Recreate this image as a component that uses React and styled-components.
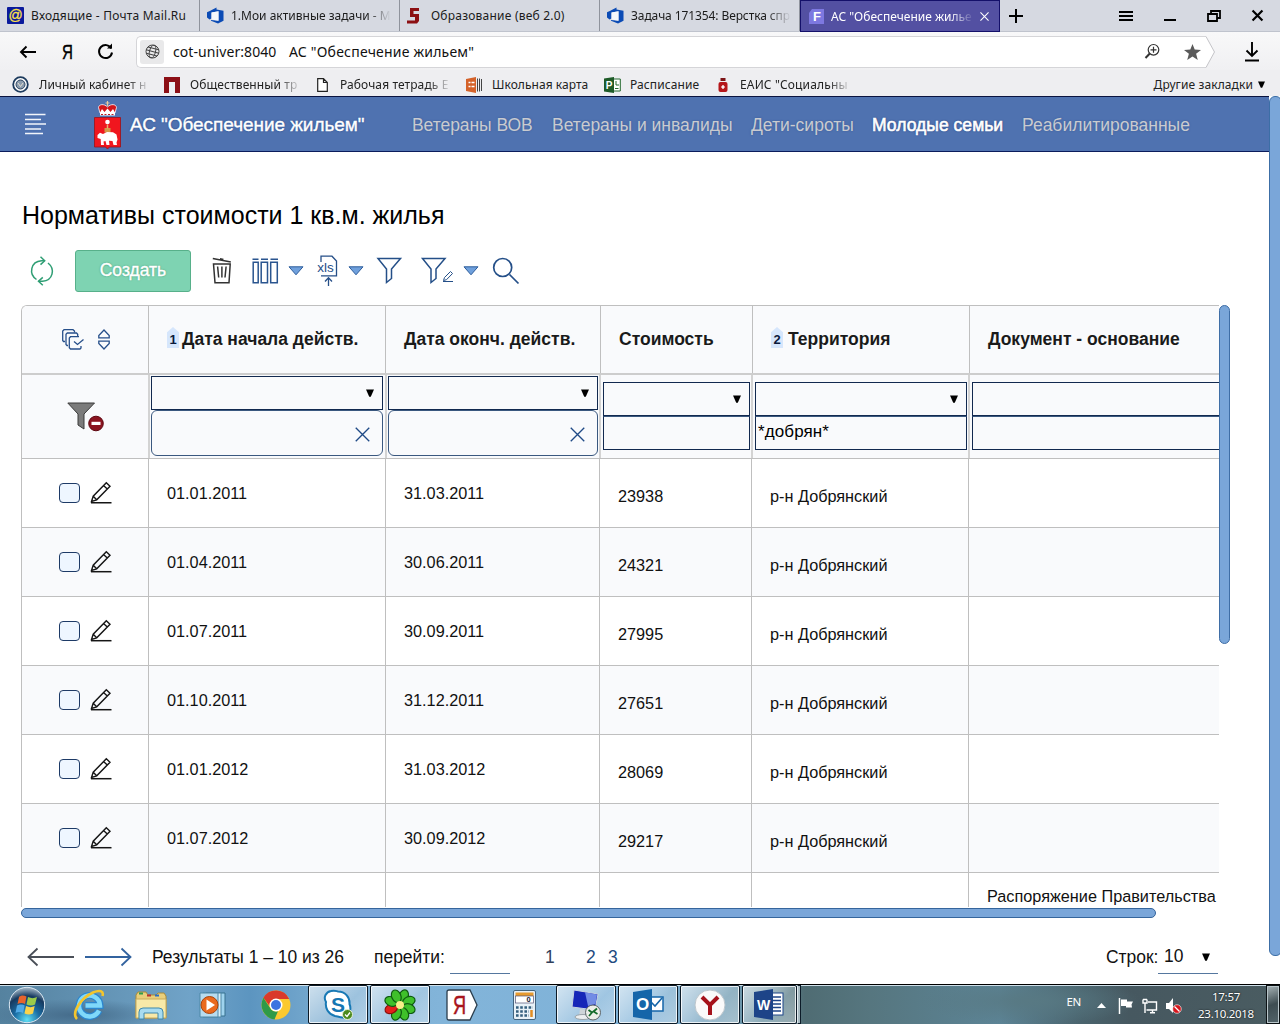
import React from "react";
import styled, { createGlobalStyle, css } from "styled-components";

const GlobalStyle = createGlobalStyle`
  * { box-sizing: border-box; }
  html, body { margin: 0; padding: 0; overflow: hidden; background: #fff; }
  body { font-family: "Liberation Sans", Arial, sans-serif; color: #111; }
  svg { display: block; flex: none; overflow: visible; }
`;

const ui = css`font-family: "Noto Sans", "Open Sans", sans-serif;`;

const Screen = styled.div`
  width: 1280px;
  height: 1024px;
  display: flex;
  flex-direction: column;
  overflow: hidden;
`;

/* ---------- browser chrome ---------- */
const TabStrip = styled.div`
  ${ui}
  height: 32px;
  flex: none;
  display: flex;
  background: #d6d9e1;
  border-bottom: 1px solid #bfc3cd;
`;
const Tab = styled.div`
  width: 200px;
  flex: none;
  height: ${(p) => (p.$active ? 32 : 31)}px;
  display: flex;
  align-items: center;
  gap: ${(p) => p.$gap || 7}px;
  padding: 0 ${(p) => (p.$active ? 10 : 8)}px 0 7px;
  font-size: 12px;
  color: ${(p) => (p.$active ? "#fff" : "#1b1b1b")};
  background: ${(p) => (p.$active ? "#5350a2" : "transparent")};
  border: ${(p) => (p.$active ? "1px solid #14106a" : "0 solid transparent")};
  border-right: 1px solid ${(p) => (p.$active ? "#14106a" : "#8f939c")};
`;
const Fade = styled.span`
  flex: ${(p) => (p.$w ? "none" : "1 1 0")};
  width: ${(p) => (p.$w ? `${p.$w}px` : "auto")};
  min-width: 0;
  overflow: hidden;
  white-space: nowrap;
  letter-spacing: ${(p) => p.$ls || 0}px;
  ${(p) => p.$fade && css`mask-image: linear-gradient(to right, #000 calc(100% - 24px), transparent);`}
`;
const WindowButtons = styled.div`
  flex: 1;
  display: flex;
  align-items: center;
  justify-content: space-between;
  padding: 0 17px 0 9px;
`;
const WindowGroup = styled.div`
  display: flex;
  align-items: center;
  gap: 31px;
`;
const AddressRow = styled.div`
  ${ui}
  height: 38px;
  flex: none;
  display: flex;
  align-items: center;
  background: linear-gradient(#f8f8f9, #f0f0f2);
  padding: 1px 20px 0 19px;
`;
const NavButtons = styled.div`
  display: flex;
  align-items: center;
  width: 117px;
  gap: 23px;
`;
const AddressBox = styled.div`
  width: 1070px;
  height: 32px;
  display: flex;
  align-items: center;
  background: #fff;
  border: 1px solid #d5d5d8;
  border-right: 0;
  border-radius: 5px 0 0 5px;
  padding-left: 3px;
  font-size: 14px;
  color: #111;
`;
const SiteBadge = styled.div`
  width: 24px;
  height: 24px;
  display: grid;
  place-items: center;
  background: #e9e9ea;
  border-radius: 3px;
  margin-right: 9px;
`;
const AddressText = styled.span`
  width: ${(p) => p.$w}px;
  white-space: nowrap;
  letter-spacing: ${(p) => p.$ls || 0}px;
`;
const AddressIcons = styled.div`
  margin-left: auto;
  display: flex;
  align-items: center;
  gap: 24px;
  padding-right: 5px;
`;
const DownloadSlot = styled.div`
  margin-left: auto;
`;
const Bookmarks = styled.div`
  ${ui}
  height: 26px;
  flex: none;
  display: flex;
  align-items: center;
  background: #eeeef1;
  padding: 3px 15px 0 12px;
  font-size: 12px;
  color: #222;
`;
const Bookmark = styled.div`
  width: ${(p) => p.$w}px;
  display: flex;
  align-items: center;
  gap: ${(p) => p.$gap || 8}px;
`;
const OtherBookmarks = styled.div`
  margin-left: auto;
  display: flex;
  align-items: center;
  gap: 5px;
  letter-spacing: 0.1px;
`;

/* ---------- application ---------- */
const Viewport = styled.div`
  height: 888px;
  flex: none;
  display: flex;
`;
const AppColumn = styled.div`
  width: 1269px;
  flex: none;
  display: flex;
  flex-direction: column;
`;
const PageScroll = styled.div`
  width: 13px;
  height: 860px;
  flex: none;
  background: #7aa6d9;
  border: 1px solid #3c6ea6;
  border-radius: 6px;
`;
const AppHeader = styled.header`
  height: 56px;
  flex: none;
  display: flex;
  align-items: center;
  background: #4f72b0;
  border-top: 1px solid #0a1440;
  border-bottom: 1px solid #0b1c5c;
  padding: 2px 0 0 25px;
  font-size: 17.5px;
`;
const Brand = styled.div`
  width: 282px;
  margin-left: 9px;
  color: #fff;
  font-size: 19px;
  white-space: nowrap;
  -webkit-text-stroke: 0.4px #fff;
  text-shadow: 0 0 2px #173a7c;
  letter-spacing: -0.06px;
`;
const Emblem = styled.div`
  margin-left: 47px;
`;
const NavItem = styled.a`
  width: ${(p) => p.$w}px;
  white-space: nowrap;
  letter-spacing: ${(p) => p.$ls || 0}px;
  color: ${(p) => (p.$active ? "#fff" : "#c9cbd0")};
  text-shadow: 0 0 2px #3a5a96;
  ${(p) => p.$active && css`-webkit-text-stroke: 0.6px #fff; text-shadow: 0 0 2px #0d2a66;`}
`;
const Content = styled.main`
  padding-left: 21px;
  display: flex;
  flex-direction: column;
`;
const Title = styled.h1`
  margin: 46px 0 0 1px;
  height: 34px;
  line-height: 34px;
  font-size: 25px;
  font-weight: 400;
  color: #000;
`;
const Toolbar = styled.div`
  height: 73px;
  display: flex;
  align-items: center;
  padding: 4px 0 0 9px;
`;
const Tool = styled.div`
  margin-left: ${(p) => p.$ml || 0}px;
`;
const CreateButton = styled.button`
  width: 116px;
  height: 42px;
  margin: 0 0 0 21px;
  padding: 0;
  border: 1px solid #57b08a;
  border-radius: 3px;
  background: #7ed3b2;
  color: #fff;
  font: 400 17.5px "Liberation Sans", Arial, sans-serif;
  -webkit-text-stroke: 0.4px #fff;
  text-shadow: 0 0 2px #2c8c66;
`;
const GridArea = styled.div`
  display: flex;
  height: 603px;
`;
const TableScroll = styled.div`
  width: 1198px;
  height: 602px;
  overflow: hidden;
  border-left: 1px solid #bfbfbf;
  border-top: 1px solid #bfbfbf;
  border-top-left-radius: 6px;
`;
const VScroll = styled.div`
  width: 11px;
  height: 339px;
  background: #7aa6d9;
  border: 1px solid #3f6ea6;
  border-radius: 6px;
`;
const HScroll = styled.div`
  width: 1135px;
  height: 10px;
  background: #7aa6d9;
  border: 1px solid #35659c;
  border-radius: 6px;
`;
const HeadRow = styled.div`
  display: grid;
  grid-template-columns: 127px 237px 215px 152px 217px 249px;
  height: 69px;
  background: #f9fafc;
  border-bottom: 2px solid #cdcdcd;
`;
const FilterRow = styled.div`
  display: grid;
  grid-template-columns: 128px 237px 214px 152px 217px 249px;
  height: 84px;
  background: #f9fafc;
  border-bottom: 1px solid #bfbfbf;
`;
const DataRow = styled.div`
  display: grid;
  grid-template-columns: 127px 237px 214px 152px 217px 250px;
  height: ${(p) => (p.$partial ? 46 : 69)}px;
  background: ${(p) => (p.$odd ? "#f9fafc" : "#fff")};
  border-bottom: ${(p) => (p.$partial ? 0 : 1)}px solid #bfbfbf;
`;
const HeadCell = styled.div`
  display: flex;
  align-items: center;
  padding-left: ${(p) => p.$pl || 18}px;
  gap: ${(p) => p.$gap || 3}px;
  border-right: ${(p) => (p.$last ? 0 : 1)}px solid #bfbfbf;
  font-size: 17.5px;
  font-weight: 700;
  color: #1a1a1a;
  white-space: nowrap;
`;
const FilterCell = styled.div`
  border-right: ${(p) => (p.$last ? 0 : 2)}px solid #d3d3d3;
  padding: ${(p) => (p.$date ? 1 : 7)}px ${(p) => (p.$last ? 0 : p.$pr || 1)}px 0 ${(p) => (p.$date ? 1 : 2)}px;
`;
const FilterIconCell = styled.div`
  border-right: 2px solid #d3d3d3;
  display: flex;
  align-items: center;
  padding: 0 0 0 45px;
`;
const SelectBox = styled.div`
  height: 34px;
  display: flex;
  align-items: center;
  justify-content: flex-end;
  padding-right: 8px;
  border: 1px solid #12294f;
  border-right-width: ${(p) => (p.$open ? 0 : 1)}px;
`;
const InputBox = styled.div`
  height: ${(p) => (p.$date ? 46 : 34)}px;
  display: flex;
  align-items: center;
  justify-content: ${(p) => (p.$date ? "flex-end" : "flex-start")};
  padding: ${(p) => (p.$date ? "2px 12px 0 0" : "0 0 3px 2px")};
  border: 1px solid ${(p) => (p.$date ? "#3a587f" : "#12294f")};
  border-right-width: ${(p) => (p.$open ? 0 : 1)}px;
  border-top-color: #3a587f;
  border-radius: ${(p) => (p.$date ? 6 : 0)}px;
  font-size: 17px;
  letter-spacing: 0.1px;
  color: #000;
`;
const Cell = styled.div`
  display: flex;
  align-items: center;
  padding: ${(p) => p.$pt || 0}px 0 0 ${(p) => p.$pl || 18}px;
  border-right: ${(p) => (p.$last ? 0 : 1)}px solid #bfbfbf;
  font-size: 16.25px;
  color: #111;
  white-space: nowrap;
`;
const Checkbox = styled.span`
  width: 21px;
  height: 20px;
  margin-right: 10px;
  border: 1px solid #1d3a66;
  border-radius: 4px;
  background: #eef6ff;
`;
const OrderBadge = styled.span`
  width: 12px;
  height: 21px;
  margin-top: -4px;
  display: grid;
  place-items: center;
  padding-top: 4px;
  background: #d6e6fc;
  clip-path: polygon(0 25%, 50% 0, 100% 25%, 100% 100%, 0 100%);
  color: #0b1a3c;
  font-size: 13px;
`;
const Pager = styled.div`
  height: 76px;
  display: flex;
  align-items: center;
  padding: 2px 51px 0 6px;
  font-size: 17.45px;
  color: #111;
`;
const PagerText = styled.span`
  width: ${(p) => p.$w}px;
  flex: none;
  margin-left: ${(p) => p.$ml || 0}px;
  white-space: nowrap;
  color: ${(p) => p.$color || "#111"};
`;
const PageInput = styled.span`
  width: 60px;
  height: 34px;
  border-bottom: 1px solid #55779f;
`;
const RowsSelect = styled.span`
  width: 60px;
  height: 34px;
  display: flex;
  align-items: center;
  justify-content: space-between;
  padding: 0 8px 0 6px;
  border-bottom: 1px solid #55779f;
`;
const RowsGroup = styled.div`
  margin-left: auto;
  display: flex;
  align-items: center;
`;

/* ---------- taskbar ---------- */
const Taskbar = styled.footer`
  ${ui}
  height: 40px;
  flex: none;
  display: flex;
  align-items: center;
  border-top: 1px solid #000;
  box-shadow: inset 0 1px 0 #cfe0ea;
  background:
    radial-gradient(ellipse 90px 16px at 75px 30px, #456c8b 0, transparent 100%),
    radial-gradient(ellipse 110px 24px at 1030px 16px, #587983 0, transparent 100%),
    linear-gradient(90deg, #55829f 0, #70a3c8 190px, #5c95c0 250px, #7aacd1 330px, #82b4d9 440px, #7fb2d8 650px, #668e9d 770px, #4f6c73 805px, #56767f 870px, #5c8496 1000px, #4a646e 1080px, #465860 1130px, #4a5c61 1280px);
`;
const Task = styled.div`
  width: ${(p) => p.$w || 60}px;
  height: 39px;
  margin-right: 2px;
  display: grid;
  place-items: center;
  border: 1px solid ${(p) => (p.$open ? "#0c1b28" : "transparent")};
  border-radius: 2px;
  ${(p) =>
    p.$open &&
    css`
      background: linear-gradient(135deg, rgba(255, 255, 255, 0.65), rgba(255, 255, 255, 0.25) 60%, rgba(255, 255, 255, 0.4));
      box-shadow: inset 0 0 0 1px rgba(255, 255, 255, 0.8);
    `}
`;
const Stack = styled.div`
  width: 4px;
  height: 39px;
  margin-left: -2px;
  border: 1px solid #0c1b28;
  border-left-color: #dfe9ee;
  background: #a9bcc3;
`;
const Tray = styled.div`
  margin-left: auto;
  display: flex;
  align-items: center;
  color: #fff;
  font-size: 11.5px;
  letter-spacing: -0.3px;
`;
const Language = styled.span`
  margin-top: -6px;
`;
const TrayIcons = styled.div`
  display: flex;
  align-items: center;
  gap: 8px;
  padding-top: 2px;
  margin: 0 14px 0 16px;
`;
const UpSlot = styled.div`
  margin-right: 4px;
`;
const Clock = styled.div`
  width: 60px;
  text-align: center;
  line-height: 17px;
  text-shadow: 0 0 2px #000;
  white-space: nowrap;
`;
const ShowDesktop = styled.div`
  width: 14px;
  height: 39px;
  margin-left: 10px;
  border: 1px solid #0b1114;
  box-shadow: inset 0 0 0 1px #b9c6ca;
  background: linear-gradient(160deg, #a7b3b6, #3e4d52 50%, #53646a);
`;

/* ---------- glyphs ---------- */
const Caret = ({ w = 8 }) => (
  <svg width={w} height={w} viewBox="0 0 8 8"><path d="M0 0.5H8L4.8 7.8H3.2Z" fill="#000" /></svg>
);
const BlueCaret = () => (
  <svg width="16" height="10" viewBox="0 0 16 10"><path d="M1 .8H15L8 8.8Z" fill="#6fa0dc" stroke="#2d5d9c" strokeWidth="1" /></svg>
);
const MailIcon = () => (
  <svg width="17" height="17" viewBox="0 0 17 17">
    <rect width="17" height="17" rx="1" fill="#0a1a9c" />
    <text x="8.5" y="12.6" fontSize="14" textAnchor="middle" fill="#ffe14a" stroke="#ffe14a" strokeWidth=".3" fontFamily="Liberation Sans">@</text>
  </svg>
);
const DevOpsIcon = () => (
  <svg width="17" height="17" viewBox="0 0 17 17">
    <path d="M0 5.200 2.800 4 9.500 .5V2.600L16.500 3.800V13.800L11 16.500 4 13.800V13L11.500 13.800V4.200L4.500 5.500V11.500L2.500 12.500 0 10.600Z" fill="#0b4bb5" />
    <path d="M4.500 5.500 11.500 4.200V13.800L4.500 12.500Z" fill="#f5f7fb" />
  </svg>
);
const FiveIcon = () => (
  <svg width="15" height="16" viewBox="0 0 15 16">
    <path d="M3 0H12V3H6.500V6H12V13L10 15.500H0V12.500H8V9H3Z" fill="#8c0f12" />
  </svg>
);
const FIcon = () => (
  <svg width="17" height="17" viewBox="0 0 17 17">
    <path d="M4 1H16V16H1V5Z" fill="#7d78e0" />
    <text x="9" y="13.4" fontSize="13" fontWeight="700" textAnchor="middle" fill="#fff" fontFamily="Liberation Sans">F</text>
  </svg>
);
const CrossIcon = ({ s = 10, c = "#fff", w = 1.2 }) => (
  <svg width={s} height={s} viewBox="0 0 10 10"><path d="M.5 .5 9.5 9.5M9.5 .5.5 9.5" stroke={c} strokeWidth={w} /></svg>
);
const EmblemIcon = () => (
  <svg width="27" height="48" viewBox="0 0 27 48">
    <path d="M6 12 4.5 6.5C5 3 10 2.5 13.5 6 17 2.5 22 3 22.500 6.500L21 12Z" fill="#d3151b" stroke="#fff" strokeWidth=".8" />
    <path d="M13.500 0V5M11.500 2H15.500" stroke="#e8c9a0" strokeWidth="1.200" />
    <path d="M6 11.500 8 8 10.500 11 13.500 7.500 16.500 11 19 8 21 11.500V14.500H6Z" fill="#fff" />
    <path d="M7 13.500H20" stroke="#c01a20" strokeWidth="1" strokeDasharray="2 1.500" />
    <path d="M.5 16.500H26.500V46H15.500L13.500 48 11.500 46H.5Z" fill="#f0161e" stroke="#9c1016" strokeWidth=".8" />
    <circle cx="13.500" cy="21" r="2.300" fill="#fff" />
    <path d="M10.500 27H16.500V31.500H10.500Z" fill="#d19a48" />
    <path d="M13.500 23.500V27.500" stroke="#e8b070" strokeWidth="1.500" />
    <path d="M3.500 34 6 31.700 9 33 13 31 19 31.200 22.500 33.500 23.500 38.500 22.500 41.500 23 44H19.500L18.500 40 15 39.700 15.500 44H12.500L11.500 40 9.500 40.500 10 44H7L6.700 38 3.500 37Z" fill="#fff" />
  </svg>
);
const RefreshIcon = () => (
  <svg width="24" height="30" viewBox="0 0 24 30" fill="none" stroke="#2f9e74" strokeWidth="1.500">
    <path d="M6.500 23.500C-1.500 18 .5 5.500 11.500 4.700H14.500" />
    <path d="M10.500.8 14.700 4.700 10.500 8.600" />
    <path d="M18 7C25.500 13 23 24.500 12.500 25.300H8.500" />
    <path d="M12.800 21.400 8.500 25.300 12.800 29.200" />
  </svg>
);
const TrashIcon = () => (
  <svg width="20" height="28" viewBox="0 0 20 28" fill="none" stroke="#333" strokeWidth="1.500">
    <path d="M.8 1.500 18.800 5M8 1.800 11.500 2.500" />
    <path d="M1.500 7H18.200L17 25.800H3Z" />
    <path d="M5.600 9.500 6.700 20.500M9.900 9.500V20.500M14.100 9.500 13 20.500" />
  </svg>
);
const ColumnsIcon = () => (
  <svg width="27" height="26" viewBox="0 0 27 26" fill="none" stroke="#2a558f" strokeWidth="1.500">
    <path d="M.5 1.200H6.500M9 1.200H16M18.500 1.200H26" strokeWidth="1.600" />
    <path d="M1.200 4.200H6.200V24.800H1.200ZM9.200 4.200H15.500V24.800H9.200ZM18.700 4.200H25.300V24.800H18.700Z" />
  </svg>
);
const XlsIcon = () => (
  <svg width="22" height="32" viewBox="0 0 22 32" fill="none" stroke="#264f88" strokeWidth="1.300">
    <path d="M5 7V1.200H16L20.500 6V20.800H5" />
    <path d="M12.500 31V23M9 26.500 12.500 22.800 16 26.500" />
    <text x="9.500" y="16.500" fontSize="13.500" textAnchor="middle" fill="#264f88" stroke="none" fontFamily="Liberation Sans">xls</text>
  </svg>
);
const FunnelIcon = () => (
  <svg width="25" height="27" viewBox="0 0 25 27" fill="none" stroke="#244f88" strokeWidth="1.500">
    <path d="M1 1.500H23.500L14.500 12V21.500L9.500 25.500V12Z" />
  </svg>
);
const FunnelEditIcon = () => (
  <svg width="34" height="27" viewBox="0 0 34 27" fill="none" stroke="#244f88" strokeWidth="1.500">
    <path d="M1.500 1.500H24L15 12V21.500L10 25.500V12Z" />
    <path d="M22.500 23.500 23.500 20.500 29.500 14.500 31.500 16.500 25.500 22.700ZM22 24.500H32" strokeWidth="1" />
  </svg>
);
const SearchIcon = () => (
  <svg width="28" height="28" viewBox="0 0 28 28" fill="none" stroke="#244f88" strokeWidth="1.700">
    <circle cx="10.700" cy="10.500" r="9" /><path d="M17.500 17.500 26.500 26.500" />
  </svg>
);
const MultiCheckIcon = () => (
  <svg width="22" height="21" viewBox="0 0 22 21" fill="none" stroke="#274f8a" strokeWidth="1.300">
    <path d="M3 12.500H1.500L.7 11.500V2L2 .7H11L12.500 2V3.500" />
    <path d="M6 16.500H5L4 15.500V5.300L5.300 4H14.500L15.700 5.300V7" />
    <path d="M19 17V19L18 20H8.500L7.300 18.800V9L8.500 7.700H17" />
    <path d="M12 12.500 15.500 15.500 21.500 10.500" />
  </svg>
);
const SortIcon = () => (
  <svg width="12" height="21" viewBox="0 0 12 21" fill="none" stroke="#274f8a" strokeWidth="1.300">
    <path d="M.8 8.800V6.500L6 1 11.200 6.500V8.800ZM.8 12.200V14.500L6 20 11.200 14.500V12.200Z" />
  </svg>
);
const ClearFilterIcon = () => (
  <svg width="37" height="30" viewBox="0 0 37 30">
    <path d="M.8 1H27.500L17 12V27L11 23V12Z" fill="#7b7b7b" stroke="#3a3a3a" />
    <circle cx="29" cy="21.500" r="7.300" fill="#8b1420" stroke="#5d0710" />
    <rect x="24.500" y="19.800" width="9" height="3.200" fill="#fff" />
  </svg>
);
const PencilIcon = () => (
  <svg width="22" height="22" viewBox="0 0 22 22" fill="none" stroke="#151515" strokeWidth="1.400">
    <path d="M1.500 19.500 3.200 14.200 16.300 .8 20 4.200 6.700 17.800ZM13.500 3.600 17.300 7M3.200 14.200 6.700 17.800" />
    <path d="M1 20.700H21.500" strokeWidth="1.500" />
  </svg>
);
const Arrow = ({ flip }) => (
  <svg width="48" height="20" viewBox="0 0 48 20" fill="none" stroke={flip ? "#4a4f58" : "#33639f"} strokeWidth="1.800">
    <path d={flip ? "M47 10H1.500M10.500 1.500 1.500 10 10.500 18.500" : "M1 10H46.500M37.500 1.500 46.500 10 37.500 18.500"} />
  </svg>
);

const BackIcon = () => (
  <svg width="18" height="14" viewBox="0 0 18 14" fill="none" stroke="#000" strokeWidth="1.900"><path d="M17 7H2M7.500 1.500 2 7 7.500 12.500" /></svg>
);
const YaIcon = () => (
  <svg width="14" height="20" viewBox="0 0 14 20">
    <text x="7" y="17" fontSize="21" textAnchor="middle" fontFamily="Liberation Sans" stroke="#000" strokeWidth=".4" transform="translate(2.300 0) scale(.72 1)">Я</text>
  </svg>
);
const ReloadIcon = () => (
  <svg width="17" height="17" viewBox="0 0 17 17" fill="none" stroke="#000" strokeWidth="2">
    <path d="M14.300 5.500A6.500 6.500 0 1 0 15 9.500" /><path d="M10 5.500H15V.5Z" fill="#000" stroke="none" />
  </svg>
);
const GlobeIcon = () => (
  <svg width="15" height="15" viewBox="0 0 15 15" fill="none" stroke="#444" strokeWidth="1">
    <circle cx="7.500" cy="7.500" r="6.500" /><ellipse cx="7.500" cy="7.500" rx="3" ry="6.500" transform="rotate(15 7.500 7.500)" /><path d="M1 7.500H14M2 4.300H13M2 10.700H13" transform="rotate(15 7.500 7.500)" />
  </svg>
);
const ZoomIcon = () => (
  <svg width="15" height="15" viewBox="0 0 15 15" fill="none" stroke="#333" strokeWidth="1.200">
    <circle cx="8.500" cy="5.800" r="5.300" /><path d="M5.500 5.800H11.500M8.500 2.800V8.800" /><path d="M4.800 9.500 .5 14" strokeWidth="2" />
  </svg>
);
const StarIcon = () => (
  <svg width="17" height="16" viewBox="0 0 17 16"><path d="M8.500 0 10.700 5.600 17 6 12.100 9.800 13.800 16 8.500 12.500 3.200 16 4.900 9.800 0 6 6.300 5.600Z" fill="#5a5a5a" /></svg>
);
const BoxTip = () => (
  <svg width="9" height="32" viewBox="0 0 9 32"><path d="M0 .5 8.500 16 0 31.500Z" fill="#fff" /><path d="M0 .5 8.500 16 0 31.500" fill="none" stroke="#c4c4c8" /></svg>
);
const DownloadIcon = () => (
  <svg width="16" height="20" viewBox="0 0 16 20" fill="none" stroke="#000" strokeWidth="1.900"><path d="M8 0V14M2.500 8.500 8 14 13.500 8.500M1 18.500H15" /></svg>
);
const MenuIcon = () => (
  <svg width="14" height="12" viewBox="0 0 14 12" stroke="#000" strokeWidth="2"><path d="M0 2H14M0 6H14M0 10H14" /></svg>
);
const MinIcon = () => (
  <svg width="12" height="12" viewBox="0 0 12 12" stroke="#000" strokeWidth="2"><path d="M0 10H12" /></svg>
);
const RestoreIcon = () => (
  <svg width="14" height="12" viewBox="0 0 14 12" fill="none" stroke="#000" strokeWidth="1.800"><path d="M1 4H10V11H1ZM4 4V1H13V8H10" /></svg>
);
const PlusIcon = () => (
  <svg width="14" height="14" viewBox="0 0 14 14" stroke="#000" strokeWidth="2"><path d="M7 0V14M0 7H14" /></svg>
);
const SealIcon = () => (
  <svg width="17" height="17" viewBox="0 0 17 17" fill="none"><circle cx="8.500" cy="8.500" r="7.300" fill="#fff" stroke="#1c3a5d" strokeWidth="1.800" /><circle cx="8.500" cy="8.500" r="4.500" fill="#8b9cae" stroke="#2d4460" /><path d="M6 7 8.500 10.500 11 7" stroke="#e3ded0" /></svg>
);
const GateIcon = () => (
  <svg width="16" height="16" viewBox="0 0 16 16"><path d="M0 0H16V16H11V5H5V16H0Z" fill="#8c0f16" /></svg>
);
const FileIcon = () => (
  <svg width="11" height="14" viewBox="0 0 11 14" fill="#fff" stroke="#222" strokeWidth="1.200"><path d="M.7.7H6.500L10.300 4.500V13.300H.7ZM6.500.7V4.500H10.300" /></svg>
);
const CardIcon = () => (
  <svg width="17" height="16" viewBox="0 0 17 16"><path d="M0 2 10 0V16L0 14Z" fill="#d4622a" /><path d="M2.500 5.500H4.500M2.500 9.500H4.500M5.500 5.500H8.500M5.500 9.500H8.500" stroke="#fff" strokeWidth="1.700" /><path d="M11.500 1.500V14.500M13.500 1.500V14.500M15.500 2V14" stroke="#444" strokeWidth="1" /></svg>
);
const ProjectIcon = () => (
  <svg width="17" height="16" viewBox="0 0 17 16"><path d="M9 2H16.300V14H9Z" fill="#fff" stroke="#23682e" /><path d="M12 4V8H15M11 11.500H14.500" stroke="#23682e" fill="none" /><path d="M0 1.500 10 0V16L0 14.500Z" fill="#1e5b28" /><text x="5" y="12" fontSize="10" fontWeight="700" textAnchor="middle" fill="#fff" fontFamily="Liberation Sans">P</text></svg>
);
const JarIcon = () => (
  <svg width="10" height="14" viewBox="0 0 10 14"><path d="M2.500 0H7.500V3H2.500Z" fill="#7c1416" /><rect x=".5" y="4" width="9" height="10" rx="2" fill="#b5161a" /><path d="M5 7V11M3.300 9H6.700" stroke="#fff" strokeWidth="1.300" /></svg>
);
const BurgerIcon = () => (
  <svg width="22" height="22" viewBox="0 0 22 22" stroke="#f2f5fa" strokeWidth="1.500"><path d="M0 .5H20.500M0 5.500H16M0 10H21M0 15H16M0 19.500H18" /></svg>
);

/* taskbar glyphs */
const StartIcon = () => (
  <svg width="38" height="38" viewBox="0 0 38 38">
    <defs><radialGradient id="orb" cx="50%" cy="92%" r="90%"><stop offset="0" stopColor="#5fe0f5" /><stop offset=".4" stopColor="#1b6ea5" /><stop offset=".75" stopColor="#16395f" /><stop offset="1" stopColor="#9fb4c4" /></radialGradient></defs>
    <circle cx="19" cy="19" r="17.700" fill="url(#orb)" stroke="#dbe8f2" strokeWidth="1" />
    <path d="M11 11C13 9 16 9 18.500 10.500L17 18C15 16.500 12 16.500 9.500 18Z" fill="#e8642c" />
    <path d="M20 11C23 12.500 26 12.500 29 11L27 18.500C24 20 21 19.500 18.500 18.500Z" fill="#9ccb4a" />
    <path d="M9 19.500C11.500 18 14.500 18 16.700 19.500L15 27C12.500 25.500 10 25.500 7.500 27Z" fill="#4fa9e6" />
    <path d="M18 20C21 21.500 24 21.500 26.700 20L25 27.500C22 29 19 28.500 16.500 27.500Z" fill="#fad34a" />
  </svg>
);
const IeIcon = () => (
  <svg width="32" height="32" viewBox="0 0 32 32" fill="none">
    <path d="M26 21.500A10.500 10.500 0 1 1 27 16.500H12.500" stroke="#2b86cf" strokeWidth="7" />
    <path d="M26 21.500A10.500 10.500 0 1 1 27 16.500H12.500" stroke="#7fd8fa" strokeWidth="4.500" />
    <path d="M4 30C-2 24 8 9 20 3.500 27 .5 31 2 29.500 7" stroke="#f3c52d" strokeWidth="2.600" />
  </svg>
);
const FolderIcon = () => (
  <svg width="34" height="30" viewBox="0 0 34 30">
    <path d="M2 5 4 2H12L14 5H22L24 3H30L32 6V28H2Z" fill="#e9cf7b" stroke="#a98a3a" />
    <path d="M5 3.500H9" stroke="#2f9c4b" strokeWidth="2" /><path d="M13 5.500H17" stroke="#b33" strokeWidth="2" /><path d="M21 5.500H25" stroke="#2b6fc4" strokeWidth="2" />
    <path d="M2 9H32V28H2Z" fill="#f8e9a8" stroke="#c8ab5c" />
    <path d="M5 29V22Q5 18 9 18H25Q29 18 29 22V29H24V23H10V29Z" fill="#a8dcf0" stroke="#3f88ac" />
  </svg>
);
const PlayerIcon = () => (
  <svg width="24" height="26" viewBox="0 0 24 26">
    <path d="M6 1H25V24H6Z" fill="#9fd3ee" stroke="#37708f" /><path d="M3 1H21V25H3Z" fill="#d9eff9" stroke="#4f88a6" /><path d="M0 1H18V25H0Z" fill="#b7dcef" stroke="#4f88a6" />
    <circle cx="9.500" cy="13" r="8.500" fill="#ea6a1e" stroke="#a8430c" /><path d="M6.500 7.500 15 13 6.500 18.500Z" fill="#fff" />
  </svg>
);
const ChromeIcon = () => (
  <svg width="30" height="30" viewBox="0 0 30 30">
    <circle cx="15" cy="15" r="14.500" fill="#fbc92f" />
    <path d="M2.400 7.800A14.500 14.500 0 0 1 28.200 9H15A6.500 6.500 0 0 0 8.500 16Z" fill="#d93a2b" />
    <path d="M2.400 7.800 9.500 18.500A6.500 6.500 0 0 0 17 21.200L13.500 29.400A14.500 14.500 0 0 1 2.400 7.800Z" fill="#2f9a48" />
    <circle cx="15" cy="15" r="6.500" fill="#fff" /><circle cx="15" cy="15" r="5" fill="#3b74e0" />
  </svg>
);
const SkypeIcon = () => (
  <svg width="30" height="30" viewBox="0 0 30 30">
    <path d="M8 1C12 0 13 1 15 1.500 22 1.500 27 7 26.500 14 29 20 26 26 20 27.500 16 27.500 14 26 12 26 5 24 2 18 3 12 0 7 3 2 8 1Z" fill="#fff" stroke="#1879b5" strokeWidth="2" />
    <text x="15" y="21.500" fontSize="21" fontWeight="700" textAnchor="middle" fill="#1576b3" fontFamily="Liberation Sans">S</text>
    <circle cx="24.500" cy="24.500" r="5" fill="#4c8a1d" stroke="#e6efd8" /><path d="M22 24.500 24 26.500 27 22.500" fill="none" stroke="#fff" strokeWidth="1.300" />
  </svg>
);
const FlowerIcon = () => (
  <svg width="34" height="34" viewBox="0 0 34 34">
    {[0, 45, 90, 135, 180, 225, 270, 315].map((a) => (
      <ellipse key={a} cx="17" cy="7.500" rx="4.600" ry="6.500" fill={a === 225 ? "#e3201b" : "#3fc02a"} stroke={a === 225 ? "#8b0f0c" : "#0f5a10"} strokeWidth="1.200" transform={`rotate(${a + 22} 17 17)`} />
    ))}
    <circle cx="17" cy="17" r="4" fill="#f7ef8a" />
  </svg>
);
const YaTileIcon = () => (
  <svg width="32" height="32" viewBox="0 0 32 32">
    <path d="M3 1H24L31 16 24 31H3Q1 31 1 29V3Q1 1 3 1Z" fill="#fff" stroke="#2b3d4c" strokeWidth="1.300" />
    <text x="13" y="25" fontSize="26" textAnchor="middle" fill="#a8141c" fontFamily="Liberation Sans" transform="translate(4.500 0) scale(.7 1)" stroke="#a8141c" strokeWidth=".5">Я</text>
  </svg>
);
const CalcIcon = () => (
  <svg width="23" height="30" viewBox="0 0 23 30">
    <rect x=".5" y=".5" width="22" height="29" rx="1.500" fill="#e8f1f7" stroke="#43647e" />
    <rect x="2.500" y="2.500" width="18" height="3.500" fill="#e79a2e" /><rect x="2.500" y="6" width="18" height="7" fill="#fff" stroke="#557" strokeWidth=".7" />
    <text x="15.500" y="12" fontSize="7.500" fontWeight="700" fill="#123" textAnchor="middle" fontFamily="Liberation Sans">0</text>
    <path d="M3 17.500H20M3 21.500H16M3 25.500H16" stroke="#35607f" strokeWidth="2.500" strokeDasharray="2.600 1.600" /><path d="M18.500 20V27" stroke="#e28c22" strokeWidth="2.500" />
  </svg>
);
const RemoteIcon = () => (
  <svg width="32" height="32" viewBox="0 0 32 32">
    <path d="M4 1 28 5 25 21 2 18Z" fill="#1526b8" stroke="#c8d4e2" /><path d="M15 3.200 27 5.500 25.500 15 18 17Z" fill="#8aa6f0" opacity=".8" />
    <path d="M10 20 17 21V27H9Z" fill="#cfd4d8" /><ellipse cx="13" cy="28" rx="8" ry="2.500" fill="#eceeef" stroke="#9aa3a8" />
    <circle cx="23" cy="23.500" r="7.500" fill="#eceee8" stroke="#5d6468" /><path d="M18.500 21 22 23.500 19 27M27 19.500 23.500 22.500 27.500 25" fill="none" stroke="#146b2a" strokeWidth="1.800" />
  </svg>
);
const OfficeIcon = ({ letter, color, mail }) => (
  <svg width="31" height="31" viewBox="0 0 31 31">
    {mail ? (
      <><rect x="14" y="8" width="16" height="14" fill="#fff" stroke={color} strokeWidth="1.500" /><path d="M17 12 22 17 29 9" fill="none" stroke={color} strokeWidth="1.600" /></>
    ) : (
      <><rect x="14" y="4" width="15" height="22" fill="#fff" stroke={color} /><path d="M19 8H27M19 11.500H27M19 15H27M19 18.500H27M19 22H27" stroke={color} strokeWidth="1.300" /></>
    )}
    <path d="M0 3 19 0V31L0 28Z" fill={color} />
    <text x="9.500" y="21" fontSize={mail ? 17 : 14} fontWeight="700" textAnchor="middle" fill="#fff" fontFamily="Liberation Sans">{letter}</text>
  </svg>
);
const YandexIcon = () => (
  <svg width="32" height="32" viewBox="0 0 32 32">
    <circle cx="16" cy="16" r="15" fill="#fafafa" stroke="#bcc6cc" /><path d="M8 8 16 16 24 8M16 15V26" fill="none" stroke="#a5121b" strokeWidth="4" />
  </svg>
);
const UpIcon = () => (<svg width="9" height="5" viewBox="0 0 9 5"><path d="M0 5 4.500 0 9 5Z" fill="#fff" /></svg>);
const FlagIcon = () => (<svg width="16" height="16" viewBox="0 0 16 16"><path d="M1.500 0V16" stroke="#fff" strokeWidth="1.500" /><path d="M3 1.500H9V3.500H15L13.500 6.500 14 9.500H8V8H3Z" fill="#fff" /></svg>);
const NetIcon = () => (<svg width="16" height="16" viewBox="0 0 16 16" fill="none" stroke="#fff" strokeWidth="1.400"><path d="M6 4H14.500V12H4.500M8 14.800H13M10.500 12V14.500" /><path d="M1 1.500V5H5V1.500M3 5V15M1 1.500H5" /></svg>);
const SoundIcon = () => (<svg width="16" height="16" viewBox="0 0 16 16"><path d="M0 5H3L7 0V15L3 11H0Z" fill="#fff" /><circle cx="11" cy="11" r="4.300" fill="#d6161c" stroke="#fff" strokeWidth=".6" /><path d="M8.500 8.500 13.500 13.500" stroke="#fff" strokeWidth="1.300" /></svg>);

/* ---------- data ---------- */
const rows = [
  ["01.01.2011", "31.03.2011", "23938"],
  ["01.04.2011", "30.06.2011", "24321"],
  ["01.07.2011", "30.09.2011", "27995"],
  ["01.10.2011", "31.12.2011", "27651"],
  ["01.01.2012", "31.03.2012", "28069"],
  ["01.07.2012", "30.09.2012", "29217"],
];

export default function App() {
  return (
    <Screen>
      <GlobalStyle />
      <TabStrip>
        <Tab><MailIcon /><Fade $ls={0.22}>Входящие - Почта Mail.Ru</Fade></Tab>
        <Tab><DevOpsIcon /><Fade $fade>1.Мои активные задачи - М</Fade></Tab>
        <Tab $gap={9}><FiveIcon /><Fade $ls={0.22}>Образование (веб 2.0)</Fade></Tab>
        <Tab><DevOpsIcon /><Fade $fade $ls={-0.1}>Задача 171354: Верстка спр</Fade></Tab>
        <Tab $active $gap={6}><FIcon /><Fade $fade>АС "Обеспечение жилье</Fade><CrossIcon s={9} /></Tab>
        <WindowButtons>
          <PlusIcon />
          <WindowGroup><MenuIcon /><MinIcon /><RestoreIcon /><CrossIcon s={11} c="#000" w={2} /></WindowGroup>
        </WindowButtons>
      </TabStrip>
      <AddressRow>
        <NavButtons><BackIcon /><YaIcon /><ReloadIcon /></NavButtons>
        <AddressBox>
          <SiteBadge><GlobeIcon /></SiteBadge>
          <AddressText $w={116} $ls={0.08}>cot-univer:8040</AddressText>
          <AddressText $w={200} $ls={0.2}>АС "Обеспечение жильем"</AddressText>
          <AddressIcons><ZoomIcon /><StarIcon /></AddressIcons>
        </AddressBox>
        <BoxTip />
        <DownloadSlot><DownloadIcon /></DownloadSlot>
      </AddressRow>
      <Bookmarks>
        <Bookmark $w={152} $gap={10}><SealIcon /><Fade $w={112} $fade>Личный кабинет н</Fade></Bookmark>
        <Bookmark $w={153} $gap={10}><GateIcon /><Fade $w={112} $fade $ls={0.1}>Общественный тр</Fade></Bookmark>
        <Bookmark $w={149} $gap={12}><FileIcon /><Fade $w={112} $fade $ls={0.1}>Рабочая тетрадь Е</Fade></Bookmark>
        <Bookmark $w={138} $gap={9}><CardIcon /><Fade $ls={0.05}>Школьная карта</Fade></Bookmark>
        <Bookmark $w={114} $gap={9}><ProjectIcon /><Fade $ls={0.1}>Расписание</Fade></Bookmark>
        <Bookmark $w={140} $gap={12}><JarIcon /><Fade $w={112} $fade $ls={0.15}>ЕАИС "Социальны</Fade></Bookmark>
        <OtherBookmarks>Другие закладки<Caret w={7} /></OtherBookmarks>
      </Bookmarks>

      <Viewport>
        <AppColumn>
          <AppHeader>
            <BurgerIcon />
            <Emblem><EmblemIcon /></Emblem>
            <Brand>АС "Обеспечение жильем"</Brand>
            <NavItem $w={140} $ls={-0.06}>Ветераны ВОВ</NavItem>
            <NavItem $w={199}>Ветераны и инвалиды</NavItem>
            <NavItem $w={121}>Дети-сироты</NavItem>
            <NavItem $w={150} $ls={0.04} $active>Молодые семьи</NavItem>
            <NavItem $w={170}>Реабилитированные</NavItem>
          </AppHeader>
          <Content>
            <Title>Нормативы стоимости 1 кв.м. жилья</Title>
            <Toolbar>
              <RefreshIcon />
              <CreateButton>Создать</CreateButton>
              <Tool $ml={21}><TrashIcon /></Tool>
              <Tool $ml={20}><ColumnsIcon /></Tool>
              <Tool $ml={9}><BlueCaret /></Tool>
              <Tool $ml={12}><XlsIcon /></Tool>
              <Tool $ml={10}><BlueCaret /></Tool>
              <Tool $ml={13}><FunnelIcon /></Tool>
              <Tool $ml={19}><FunnelEditIcon /></Tool>
              <Tool $ml={8}><BlueCaret /></Tool>
              <Tool $ml={13}><SearchIcon /></Tool>
            </Toolbar>
            <GridArea>
              <TableScroll>
                <HeadRow>
                  <HeadCell $pl={40} $gap={14}><MultiCheckIcon /><SortIcon /></HeadCell>
                  <HeadCell><OrderBadge>1</OrderBadge>Дата начала действ.</HeadCell>
                  <HeadCell>Дата оконч. действ.</HeadCell>
                  <HeadCell>Стоимость</HeadCell>
                  <HeadCell $gap={5}><OrderBadge>2</OrderBadge>Территория</HeadCell>
                  <HeadCell $last>Документ - основание</HeadCell>
                </HeadRow>
                <FilterRow>
                  <FilterIconCell><ClearFilterIcon /></FilterIconCell>
                  <FilterCell $date $pr={2}><SelectBox><Caret /></SelectBox><InputBox $date><CrossIcon s={15} c="#1f4a86" w={0.9} /></InputBox></FilterCell>
                  <FilterCell $date><SelectBox><Caret /></SelectBox><InputBox $date><CrossIcon s={15} c="#1f4a86" w={0.9} /></InputBox></FilterCell>
                  <FilterCell><SelectBox><Caret /></SelectBox><InputBox /></FilterCell>
                  <FilterCell><SelectBox><Caret /></SelectBox><InputBox>*добрян*</InputBox></FilterCell>
                  <FilterCell $last><SelectBox $open /><InputBox $open /></FilterCell>
                </FilterRow>
                {rows.map(([from, to, cost], i) => (
                  <DataRow key={from} $odd={i % 2 === 1}>
                    <Cell $pl={37}><Checkbox /><PencilIcon /></Cell>
                    <Cell>{from}</Cell>
                    <Cell>{to}</Cell>
                    <Cell $pt={7}>{cost}</Cell>
                    <Cell $pt={7}>р-н Добрянский</Cell>
                    <Cell $last />
                  </DataRow>
                ))}
                <DataRow $partial>
                  <Cell /><Cell /><Cell /><Cell /><Cell />
                  <Cell $last>Распоряжение Правительства</Cell>
                </DataRow>
              </TableScroll>
              <VScroll />
            </GridArea>
            <HScroll />
            <Pager>
              <Arrow flip /><PagerText $w={9} /><Arrow />
              <PagerText $ml={20} $w={222}>Результаты 1 – 10 из 26</PagerText>
              <PagerText $w={76}>перейти:</PagerText>
              <PageInput />
              <PagerText $ml={35} $w={41} $color="#30405c">1</PagerText>
              <PagerText $w={22} $color="#234a80">2</PagerText>
              <PagerText $w={20} $color="#234a80">3</PagerText>
              <RowsGroup><PagerText $w={52}>Строк:</PagerText><RowsSelect>10<Caret /></RowsSelect></RowsGroup>
            </Pager>
          </Content>
        </AppColumn>
        <PageScroll />
      </Viewport>

      <Taskbar>
        <Task $w={54}><StartIcon /></Task>
        <Task $w={66}><IeIcon /></Task>
        <Task $w={54}><FolderIcon /></Task>
        <Task $w={64}><PlayerIcon /></Task>
        <Task><ChromeIcon /></Task>
        <Task $open><SkypeIcon /></Task>
        <Task $open><FlowerIcon /></Task>
        <Task><YaTileIcon /></Task>
        <Task><CalcIcon /></Task>
        <Task $open><RemoteIcon /></Task>
        <Task $open><OfficeIcon letter="O" color="#1565a9" mail /></Task>
        <Task $open><YandexIcon /></Task>
        <Task $open $w={55}><OfficeIcon letter="W" color="#1d4488" /></Task>
        <Stack />
        <Tray>
          <Language>EN</Language>
          <TrayIcons><UpSlot><UpIcon /></UpSlot><FlagIcon /><NetIcon /><SoundIcon /></TrayIcons>
          <Clock><div>17:57</div><div>23.10.2018</div></Clock>
          <ShowDesktop />
        </Tray>
      </Taskbar>
    </Screen>
  );
}
